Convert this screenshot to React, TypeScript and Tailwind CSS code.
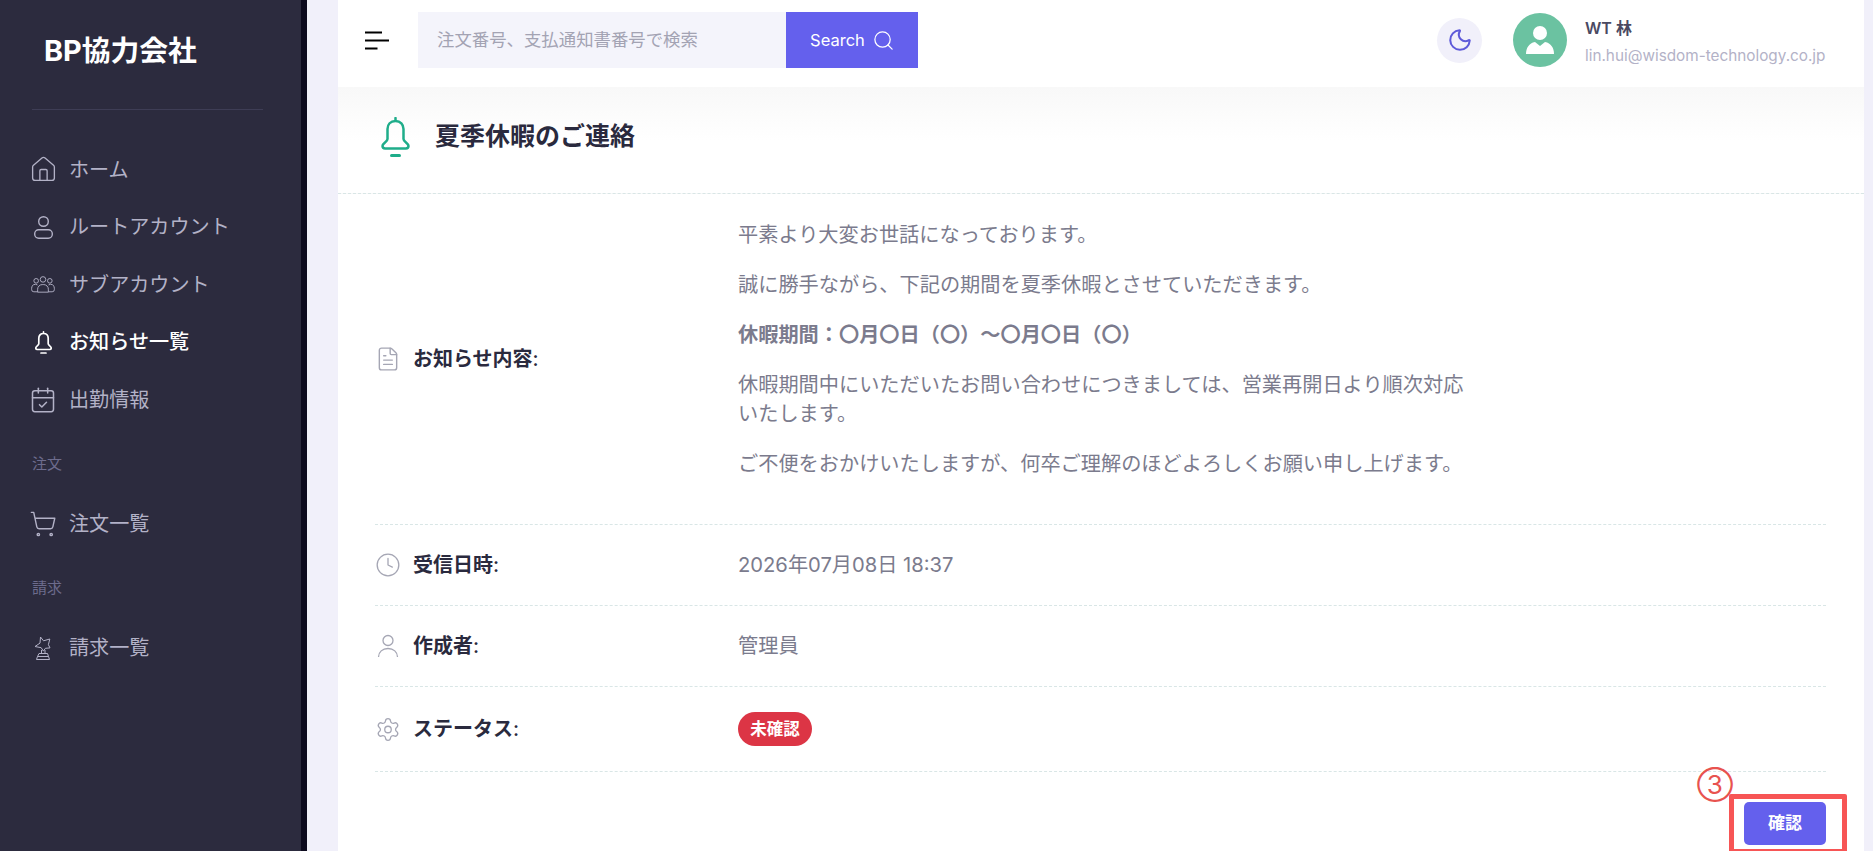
import React from "react";
import { House, CalendarCheck, ShoppingCart, FileText, Clock, Settings, Moon, Search } from "lucide-react";

const F = { fontFamily: '"Inter","Noto Sans CJK JP",sans-serif' };

const UserIcon = ({ className }: { className?: string }) => (
  <svg viewBox="0 0 19 23" fill="none" stroke="currentColor" strokeWidth="1.4" className={className}>
    <circle cx="9.5" cy="5.5" r="4.8" />
    <rect x="0.7" y="13.7" width="17.6" height="8.600" rx="4" />
  </svg>
);
const UsersIcon = ({ className }: { className?: string }) => (
  <svg viewBox="0 0 26 18" fill="none" stroke="currentColor" strokeWidth="1" className={className}>
    <circle cx="13" cy="3.500" r="3" />
    <circle cx="5.600" cy="5" r="2.500" />
    <circle cx="20.400" cy="5" r="2.500" />
    <path d="M7.200 17.300v-3.200a5 5 0 0 1 5-5h1.600a5 5 0 0 1 5 5v3.200Z" />
    <path d="M7 9.500a4 4 0 0 0-6.300 3.600v1.400a2.400 2.400 0 0 0 2.400 2.400h4.100M19 9.500a4 4 0 0 1 6.300 3.600v1.400a2.400 2.400 0 0 1-2.400 2.400h-4.100" />
  </svg>
);
const TrophyStar = ({ className }: { className?: string }) => (
  <svg viewBox="0 0 18 24" fill="none" stroke="currentColor" strokeWidth="1" className={className}>
    <path d="M6.500 1l3 3.800 6.300-1.800-1.400 5.700 1.600 3.200-4.600.4-2 2.800-2.200-3.400-6.200-1.200 5-3.400Z" />
    <path d="M7.500 14v3.500M11 14v3.500M5 17.500h8.500M3.500 20.500h11M2.500 23.500h13M3.500 20.500l-1 3M14.500 20.500l1 3M5 17.500l-1.500 3M13.500 17.500l1 3" />
  </svg>
);
const NavBell = () => (
  <svg viewBox="0 0 17 23" className="h-[23px] w-[17px]" fill="none" stroke="currentColor" strokeWidth="1.700" strokeLinecap="round" strokeLinejoin="round">
    <path d="M8.500.9v1.600M8.500 2.500c-3 0-4.700 2-4.700 4.800v5.400c0 1.800-3 2.500-3 4.300 0 .8.600 1.500 1.500 1.500h12.400c.9 0 1.500-.7 1.500-1.500 0-1.800-3-2.500-3-4.300V7.300c0-2.800-1.700-4.800-4.700-4.800Z" />
    <path d="M6 22h5" />
  </svg>
);

const Nav = ({ icon, label, active }: { icon: React.ReactNode; label: string; active?: boolean }) => (
  <div className={`flex h-[57.5px] items-center gap-[11px] pl-[28px] text-[20.1px] ${active ? "font-medium text-white" : "text-[#b3b2c7]"}`}>
    <span className="flex w-[30px] justify-center">{icon}</span>
    <span>{label}</span>
  </div>
);

const Section = ({ label }: { label: string }) => (
  <div className="flex h-[66.5px] items-center pt-[5px] pl-[32px] text-[15px] text-[#6d6c8d]">{label}</div>
);

const Row = ({ icon, label, children, h }: { icon: React.ReactNode; label: string; children: React.ReactNode; h: string }) => (
  <div className={`flex items-center border-b border-dashed border-[#d9e6e6] ${h}`}>
    <div className="flex w-[363px] items-center">
      <span className="flex w-[26px] justify-center text-[#a5a6b4]">{icon}</span>
      <span className="ml-[12px] text-[20px] font-bold text-[#2a2a3e]">
        {label}
        <span className="font-medium">:</span>
      </span>
    </div>
    <div className="text-[20.2px] text-[#7b7b8d]">{children}</div>
  </div>
);

export default function App() {
  return (
    <div style={F} className="relative flex h-[851px] w-[1873px] overflow-hidden bg-[#f1f0fa]">
      <aside className="w-[307px] shrink-0 border-r-[6px] border-[#0d0b1e] bg-[#2c2b3e]">
        <div className="flex h-[109px] items-center pb-[8px] pl-[44px] text-[28.8px] font-bold text-white">BP協力会社</div>
        <div className="mx-[32px] h-px w-[231px] bg-[#3e3d55]" />
        <div className="pt-[31px]">
          <Nav icon={<House size={29} strokeWidth={1.1} />} label="ホーム" />
          <Nav icon={<UserIcon className="h-[23px] w-[19px]" />} label="ルートアカウント" />
          <Nav icon={<UsersIcon className="h-[17px] w-[24px]" />} label="サブアカウント" />
          <Nav active icon={<NavBell />} label="お知らせ一覧" />
          <Nav icon={<CalendarCheck size={28} strokeWidth={1.3} />} label="出勤情報" />
          <Section label="注文" />
          <Nav icon={<ShoppingCart size={28} strokeWidth={1.2} />} label="注文一覧" />
          <Section label="請求" />
          <Nav icon={<TrophyStar className="h-[24px] w-[18px]" />} label="請求一覧" />
        </div>
      </aside>

      <main className="ml-[31px] flex w-[1526px] flex-col bg-white">
        <header className="flex h-[87px] shrink-0 items-center pb-[7px]">
          <svg viewBox="0 0 24 19" className="ml-[27px] h-[19px] w-[24px]" stroke="#000" strokeWidth="2">
            <path d="M0 1.500h17M0 9.500h24M0 17.500h12.500" />
          </svg>
          <div className="ml-[29px] flex h-[56px] w-[368px] items-center bg-[#f4f4fb] pl-[19px] text-[17.4px] text-[#a3a3b3]">注文番号、支払通知書番号で検索</div>
          <div className="flex h-[56px] w-[132px] items-center justify-center gap-[7px] bg-[#6460ed] pl-[1px] text-[16.5px] text-white">
            Search <Search size={23} strokeWidth={1.3} />
          </div>
          <div className="ml-auto flex h-[45px] w-[45px] items-center justify-center rounded-full bg-[#f1f0fa] text-[#5e5ad9]">
            <Moon size={26} strokeWidth={1.9} />
          </div>
          <div className="ml-[31px] flex h-[54px] w-[54px] items-center justify-center rounded-full bg-[#6bc2a1]">
            <svg viewBox="0 0 30 30" className="h-[30px] w-[30px]" fill="#fff">
              <circle cx="15" cy="8" r="7" />
              <path d="M1 29c0-6 3-11 9-12l5 4 5-4c6 1 9 6 9 12Z" />
            </svg>
          </div>
          <div className="mr-[38px] ml-[18px] flex w-[241px] flex-col pt-[4px]">
            <span className="text-[16px] leading-[22px] font-semibold text-[#4a4962]">WT 林</span>
            <span className="mt-[6px] text-[15.3px] leading-[22px] text-[#b3b2c7]">lin.hui@wisdom-technology.co.jp</span>
          </div>
        </header>

        <div className="flex h-[107px] shrink-0 items-center gap-[25px] border-b border-dashed border-[#d9e6e6] bg-gradient-to-b from-[#f8f8f8] to-white to-50% pb-[6px] pl-[43px]">
          <svg viewBox="0 0 29 40" className="h-[40px] w-[29px]" fill="none" stroke="#1fad8a" strokeWidth="2.500" strokeLinecap="round" strokeLinejoin="round">
            <path d="M14.500 1v3M14.500 4c-5 0-8 3.400-8 8v10c0 3-5 4-5 7 0 1.400 1 2.400 2.600 2.400h20.800c1.600 0 2.600-1 2.600-2.400 0-3-5-4-5-7V12c0-4.600-3-8-8-8Z" />
            <path d="M10.500 38.500h8" strokeWidth="3" />
          </svg>
          <h1 className="text-[25px] font-bold text-[#2a2a3e]">夏季休暇のご連絡</h1>
        </div>

        <div className="mr-[38px] ml-[37px]">
          <Row h="h-[331px]" icon={<FileText size={26} strokeWidth={1.3} />} label="お知らせ内容">
            <div className="flex w-[745px] flex-col gap-[21px] pb-[21px] leading-[29px]">
              <p>平素より大変お世話になっております。</p>
              <p>誠に勝手ながら、下記の期間を夏季休暇とさせていただきます。</p>
              <p className="font-bold">休暇期間：〇月〇日（〇）～〇月〇日（〇）</p>
              <p>休暇期間中にいただいたお問い合わせにつきましては、営業再開日より順次対応いたします。</p>
              <p>ご不便をおかけいたしますが、何卒ご理解のほどよろしくお願い申し上げます。</p>
            </div>
          </Row>
          <Row h="h-[81px]" icon={<Clock size={30} strokeWidth={1.2} />} label="受信日時">2026年07月08日 18:37</Row>
          <Row h="h-[81px]" icon={
            <svg viewBox="0 0 24 24" fill="none" stroke="currentColor" strokeWidth="1.3" className="h-[24px] w-[24px]"><circle cx="12" cy="6.500" r="5" /><path d="M2.500 23c0-5 4-8.500 9.500-8.500s9.500 3.500 9.500 8.500" /></svg>
          } label="作成者">管理員</Row>
          <Row h="h-[85px]" icon={<Settings size={29} strokeWidth={1.2} />} label="ステータス">
            <span className="flex h-[34px] w-[74px] items-center justify-center rounded-full bg-[#dc3545] text-[16.500px] font-bold text-white">未確認</span>
          </Row>
          <div className="flex justify-end pt-[30px]">
            <button className="h-[43px] w-[82px] rounded-[5px] bg-[#6460ed] text-[17px] font-semibold text-white">確認</button>
          </div>
        </div>
      </main>

      <div className="absolute top-[794px] left-[1729px] h-[60px] w-[118px] rounded-[2px] border-[5px] border-[#f75555]" />
      <div className="absolute top-[770px] left-[1699px] flex h-[30px] w-[32px] items-center justify-center text-[26px] leading-none text-[#e8534f]">③</div>
    </div>
  );
}
